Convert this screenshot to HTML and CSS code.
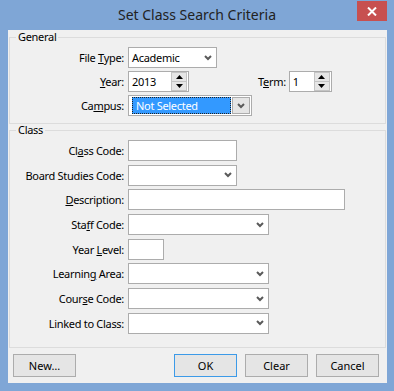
FILE: index.html
```html
<!DOCTYPE html>
<html lang="en">

<head>
    <meta charset="UTF-8">
    <title>Set Class Search Criteria</title>
    <link rel="stylesheet" href="styles.css">
</head>

<body>
    <div class="window">
        <div class="titlebar">
            <span class="title">Set Class Search Criteria</span>
            <button class="close-btn">
                <svg width="10" height="9" viewBox="0 0 10 9"><path d="M1 0.5 L9 8.5 M9 0.5 L1 8.5" stroke="#fff" stroke-width="2"/></svg>
            </button>
        </div>

        <div class="client">
            <fieldset class="group">
                <legend>General</legend>
                <div class="rows rows-general">
                    <div class="row">
                        <label class="lbl">File <u>T</u>ype:</label>
                        <div class="box combo w-filetype">
                            <span>Academic</span>
                            <svg class="chev" width="8" height="6" viewBox="0 0 8 6"><path d="M1 1 L4 4 L7 1" fill="none" stroke="#5a5a5a" stroke-width="2"/></svg>
                        </div>
                    </div>
                    <div class="row">
                        <label class="lbl"><u>Y</u>ear:</label>
                        <div class="box spin w-year">
                            <span>2013</span>
                            <div class="spinner">
                                <div class="spin-btn"><svg width="7" height="4" viewBox="0 0 7 4"><path d="M0 4 L3.5 0 L7 4 Z" fill="#000"/></svg></div>
                                <div class="spin-btn"><svg width="7" height="4" viewBox="0 0 7 4"><path d="M0 0 L3.5 4 L7 0 Z" fill="#000"/></svg></div>
                            </div>
                        </div>
                        <label class="lbl-term">T<u>e</u>rm:</label>
                        <div class="box spin w-term">
                            <span>1</span>
                            <div class="spinner">
                                <div class="spin-btn"><svg width="7" height="4" viewBox="0 0 7 4"><path d="M0 4 L3.5 0 L7 4 Z" fill="#000"/></svg></div>
                                <div class="spin-btn"><svg width="7" height="4" viewBox="0 0 7 4"><path d="M0 0 L3.5 4 L7 0 Z" fill="#000"/></svg></div>
                            </div>
                        </div>
                    </div>
                    <div class="row">
                        <label class="lbl">Ca<u>m</u>pus:</label>
                        <div class="box combo-focus w-campus">
                            <span class="selected">Not Selected</span>
                            <div class="drop-btn">
                                <svg width="8" height="6" viewBox="0 0 8 6"><path d="M1 1 L4 4 L7 1" fill="none" stroke="#5a5a5a" stroke-width="2"/></svg>
                            </div>
                        </div>
                    </div>
                </div>
            </fieldset>

            <fieldset class="group">
                <legend>Class</legend>
                <div class="rows rows-class">
                    <div class="row">
                        <label class="lbl">Cl<u>a</u>ss Code:</label>
                        <div class="box w-short"></div>
                    </div>
                    <div class="row">
                        <label class="lbl">Board Studies Code:</label>
                        <div class="box combo w-short">
                            <span></span>
                            <svg class="chev" width="8" height="6" viewBox="0 0 8 6"><path d="M1 1 L4 4 L7 1" fill="none" stroke="#5a5a5a" stroke-width="2"/></svg>
                        </div>
                    </div>
                    <div class="row">
                        <label class="lbl"><u>D</u>escription:</label>
                        <div class="box w-long"></div>
                    </div>
                    <div class="row">
                        <label class="lbl">Sta<u>f</u>f Code:</label>
                        <div class="box combo w-mid">
                            <span></span>
                            <svg class="chev" width="8" height="6" viewBox="0 0 8 6"><path d="M1 1 L4 4 L7 1" fill="none" stroke="#5a5a5a" stroke-width="2"/></svg>
                        </div>
                    </div>
                    <div class="row">
                        <label class="lbl">Year <u>L</u>evel:</label>
                        <div class="box w-tiny"></div>
                    </div>
                    <div class="row">
                        <label class="lbl">Learnin<u>g</u> Area:</label>
                        <div class="box combo w-mid">
                            <span></span>
                            <svg class="chev" width="8" height="6" viewBox="0 0 8 6"><path d="M1 1 L4 4 L7 1" fill="none" stroke="#5a5a5a" stroke-width="2"/></svg>
                        </div>
                    </div>
                    <div class="row">
                        <label class="lbl">Cour<u>s</u>e Code:</label>
                        <div class="box combo w-mid">
                            <span></span>
                            <svg class="chev" width="8" height="6" viewBox="0 0 8 6"><path d="M1 1 L4 4 L7 1" fill="none" stroke="#5a5a5a" stroke-width="2"/></svg>
                        </div>
                    </div>
                    <div class="row">
                        <label class="lbl">Linked to Class:</label>
                        <div class="box combo w-mid">
                            <span></span>
                            <svg class="chev" width="8" height="6" viewBox="0 0 8 6"><path d="M1 1 L4 4 L7 1" fill="none" stroke="#5a5a5a" stroke-width="2"/></svg>
                        </div>
                    </div>
                </div>
            </fieldset>

            <div class="buttons">
                <button class="btn">New…</button>
                <button class="btn btn-default push">OK</button>
                <button class="btn">Clear</button>
                <button class="btn">Cancel</button>
            </div>
        </div>
    </div>
</body>

</html>
```

FILE: styles.css
```css
* {
    margin: 0;
    padding: 0;
    box-sizing: border-box;
}

body {
    font-family: "Noto Sans", "Open Sans", sans-serif;
    font-size: 11px;
    letter-spacing: -0.3px;
    color: #000;
}

.window {
    width: 394px;
    height: 391px;
    background-color: #7fa6d6;
    display: flex;
    flex-direction: column;
}

.titlebar {
    height: 30px;
    display: flex;
    align-items: flex-start;
    padding: 0 7px 0 37px;
}

.title {
    flex: 1;
    text-align: center;
    line-height: 30px;
    font-size: 14px;
    letter-spacing: 0;
    color: #222;
}

.close-btn {
    width: 30px;
    height: 20px;
    margin-top: 1px;
    border: none;
    background-color: #c75050;
    display: flex;
    align-items: center;
    justify-content: center;
}

.client {
    height: 353px;
    margin: 0 7px 0 8px;
    background-color: #f0f0f0;
    display: flex;
    flex-direction: column;
}

.group {
    border: 1px solid #dcdcdc;
    margin: 0 1px;
    min-width: 0;
}

.group:first-child {
    margin-top: 1px;
}

.group legend {
    line-height: 12px;
    margin-left: 6px;
    padding: 0 2px;
}

.rows {
    display: flex;
    flex-direction: column;
}

.rows-general {
    gap: 3px;
    padding: 4px 0 7px;
}

.rows-class {
    gap: 3.7px;
    padding: 4px 0 13px;
}

.row {
    display: flex;
    align-items: center;
    height: 21px;
}

.lbl {
    width: 114px;
    margin-right: 4px;
    text-align: right;
}

.lbl-term {
    margin-left: 69px;
    margin-right: 3px;
}

.box {
    height: 21px;
    border: 1px solid #acacac;
    background-color: #fff;
    display: flex;
    align-items: center;
    padding-left: 3px;
}

.combo {
    justify-content: space-between;
    padding-right: 4px;
}

.spin {
    justify-content: space-between;
    padding-right: 1px;
}

.spinner {
    width: 16px;
    height: 19px;
    display: flex;
    flex-direction: column;
}

.spin-btn {
    flex: 1;
    background-color: #e6e6e6;
    border: 1px solid #c4c4c4;
    display: flex;
    align-items: center;
    justify-content: center;
}

.spin-btn + .spin-btn {
    border-top: none;
}

.combo-focus {
    padding: 1px;
    padding-left: 3px;
}

.selected {
    flex: 1;
    height: 17px;
    line-height: 15px;
    padding-left: 3px;
    background-color: #3399ff;
    color: #fff;
    border: 1px dotted #222;
    margin-right: 1px;
}

.drop-btn {
    width: 18px;
    height: 17px;
    border: 1px solid #acacac;
    background-color: #e5e5e5;
    display: flex;
    align-items: center;
    justify-content: center;
}

.w-filetype { width: 89px; }
.w-year { width: 61px; }
.w-term { width: 43px; }
.w-campus { width: 124px; }
.w-short { width: 109px; }
.w-long { width: 217px; }
.w-mid { width: 141px; }
.w-tiny { width: 36px; }

.buttons {
    display: flex;
    gap: 8px;
    padding: 6px 8px 0 5px;
}

.btn {
    width: 63px;
    height: 23px;
    border: 1px solid #acacac;
    background-color: #e5e5e5;
    font-family: inherit;
    font-size: 11px;
    color: #000;
}

.btn-default {
    border-color: #3c9ae8;
}

.push {
    margin-left: auto;
}
```
